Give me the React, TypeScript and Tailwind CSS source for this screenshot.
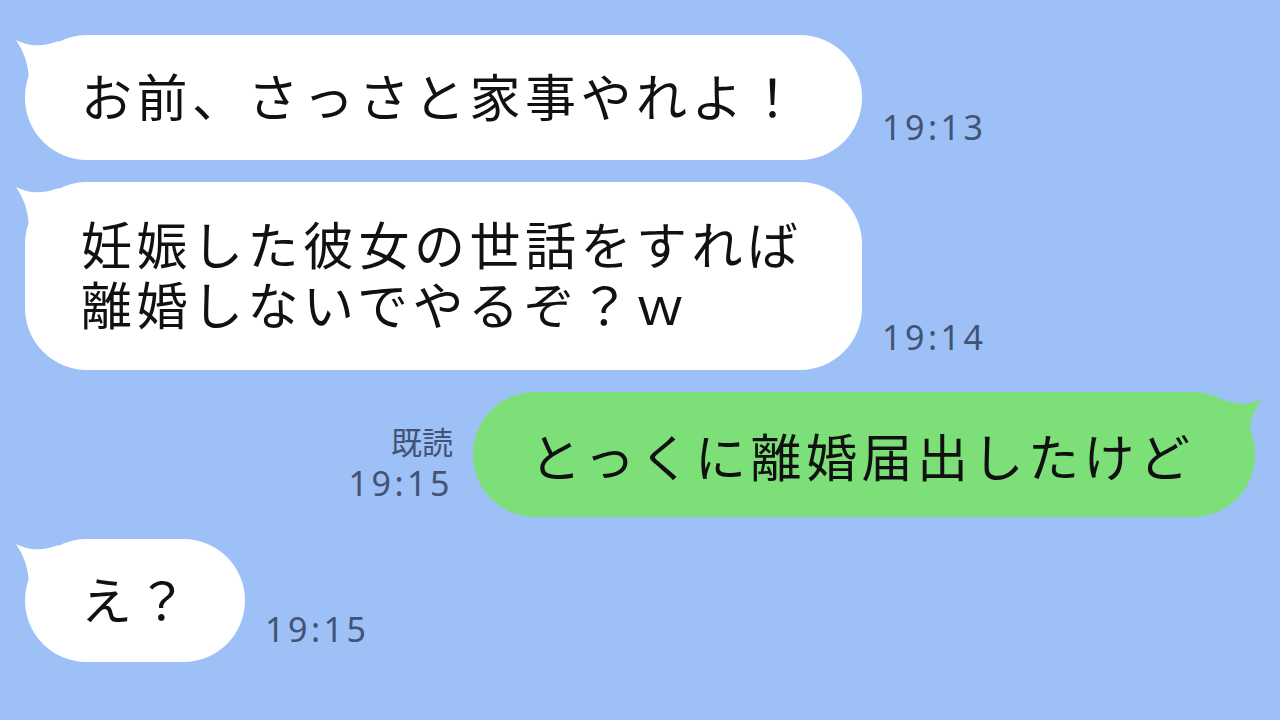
import React from "react";

const jp = { fontFamily: '"Noto Sans CJK JP", "Noto Sans", sans-serif' };
const num = { fontFamily: '"Noto Sans", "Noto Sans CJK JP", sans-serif' };

function LeftTail() {
  return (
    <svg className="absolute left-[-10px] top-0" width="44" height="44" viewBox="0 0 44 44">
      <path d="M1 5 Q20 15 44 6 L44 44 L14 44 Q13 22 1 5 Z" fill="#ffffff" />
    </svg>
  );
}

function RightTail() {
  return (
    <svg className="absolute right-[-8px] top-0" width="44" height="44" viewBox="0 0 44 44">
      <path d="M43 7 Q24 17 0 6 L0 44 L30 44 Q31 22 43 7 Z" fill="#7ddf78" />
    </svg>
  );
}

function Time({ children }: { children: React.ReactNode }) {
  return (
    <div className="text-[34px] leading-[40px] tracking-[3.5px] text-[#425374]" style={num}>
      {children}
    </div>
  );
}

function Incoming({ lines, width, height, time }: { lines: string[]; width: string; height: string; time: string }) {
  return (
    <div className="flex items-end gap-[20px] pl-[25px]">
      <div className={`relative flex flex-col justify-center rounded-[62px] bg-white pb-[6px] pl-[56px] ${width} ${height}`}>
        <LeftTail />
        {lines.map((l) => (
          <div key={l} className="relative text-[51px] leading-[60px] tracking-[4.5px] text-[#111]" style={jp}>
            {l}
          </div>
        ))}
      </div>
      <div className="pb-[13px]">
        <Time>{time}</Time>
      </div>
    </div>
  );
}

export default function App() {
  return (
    <div className="flex h-[720px] w-[1280px] flex-col gap-[22px] overflow-hidden bg-[#9dc0f7] pt-[35px]">
      <Incoming lines={["お前、さっさと家事やれよ！"]} width="w-[837px]" height="h-[125px]" time="19:13" />
      <Incoming
        lines={["妊娠した彼女の世話をすれば", "離婚しないでやるぞ？ｗ"]}
        width="w-[837px]"
        height="h-[188px]"
        time="19:14"
      />
      <div className="flex items-end justify-end gap-[20px] pr-[25px]">
        <div className="flex flex-col items-end pb-[14px]">
          <div className="mb-[6px] text-[31px] leading-[32px] text-[#425374]" style={jp}>
            既読
          </div>
          <Time>19:15</Time>
        </div>
        <div className="relative flex h-[125px] w-[782px] items-center rounded-[62px] bg-[#7ddf78] pl-[57px]">
          <RightTail />
          <div className="relative text-[51px] leading-[60px] tracking-[4.5px] text-[#111]" style={jp}>
            とっくに離婚届出したけど
          </div>
        </div>
      </div>
      <Incoming lines={["え？"]} width="w-[220px]" height="h-[123px]" time="19:15" />
    </div>
  );
}
